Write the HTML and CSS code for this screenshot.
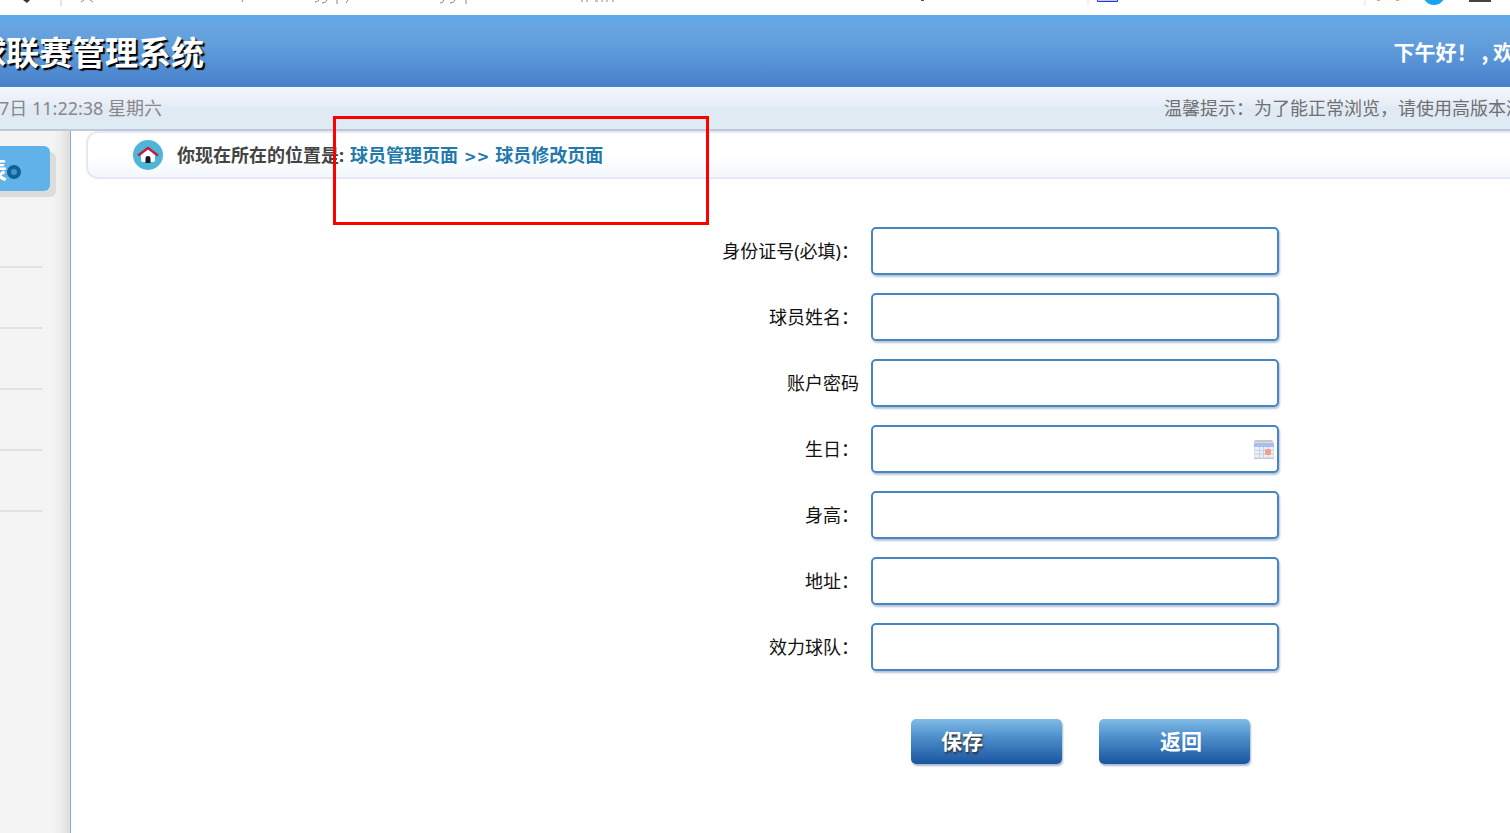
FILE: index.html
```html
<!DOCTYPE html>
<html lang="zh-CN">
<head>
    <meta charset="UTF-8">
    <meta name="viewport" content="width=device-width, initial-scale=1.0">
    <title>联赛管理系统</title>
    <link rel="stylesheet" href="styles.css">
</head>
<body>
    <div class="toolbar">
        <svg class="tool-left" width="620" height="8" viewBox="0 0 620 8">
            <path d="M23 0h7l-3 3z" fill="#333"/>
            <path d="M61 0v6" stroke="#e5e5e5" stroke-width="2"/>
            <path d="M81 2l3-2M90 0l3 2M243 0l-1 2M315 2q3 0 4-2M322 3q4 0 5-3M337 0v4M348 0l-2 3M440 3q3 0 4-3M450 3q4 0 5-3M466 0v4M581 1h2M587 0v2M595 1h3M602 0v2M606 1h2M613 0v2" stroke="#888" fill="none"/>
        </svg>
        <svg class="tool-right" width="610" height="8" viewBox="0 0 610 8">
            <path d="M21 0h3" stroke="#555" stroke-width="2"/>
            <path d="M188 0v6M465 0v6" stroke="#e5e5e5"/>
            <path d="M197.500 0v1.500h20V0" fill="#c5c8ee" stroke="#2433dd"/>
            <path d="M477 0h3M496 0h3" stroke="#ff9b57" stroke-width="2"/>
            <circle cx="534" cy="-6" r="11" fill="#12a5f4"/>
            <path d="M569 1h22" stroke="#444" stroke-width="2"/>
        </svg>
    </div>

    <header class="header">
        <h1>球联赛管理系统</h1>
        <div class="welcome"><span>下午好！</span><span>, 欢迎你</span></div>
    </header>

    <div class="time-bar">
        <span class="date">7日 11:22:38 星期六</span>
        <span class="tip">温馨提示：为了能正常浏览，请使用高版本浏</span>
    </div>

    <div class="main">
        <aside class="sidebar">
            <h2 class="menu-title">表<span class="dot"></span></h2>
            <ul class="menu">
                <li></li>
                <li></li>
                <li></li>
                <li></li>
                <li></li>
            </ul>
        </aside>

        <main class="content">
            <div class="location">
                <svg class="home" width="30" height="30" viewBox="0 0 30 30">
                    <circle cx="15" cy="15" r="15" fill="#4fb5d6"/>
                    <path d="M8 15l7-6 7 6v5q0 2-2 2H10q-2 0-2-2z" fill="#fff"/>
                    <path d="M5 15.500l10-7.500 10 7.500" fill="none" stroke="#c41e3f" stroke-width="2.400"/>
                    <path d="M12.500 23v-5q0-2 2.500-2t2.500 2v5z" fill="#16191d"/>
                </svg>
                <strong>你现在所在的位置是:</strong>
                <span class="page-name">球员管理页面<span class="arrow">&gt;&gt;</span>球员修改页面</span>
                <div class="highlight"></div>
            </div>

            <form class="player-form">
                <div class="field">
                    <label for="cardId">身份证号(必填)：</label>
                    <input type="text" id="cardId">
                </div>
                <div class="field">
                    <label for="name">球员姓名：</label>
                    <input type="text" id="name">
                </div>
                <div class="field">
                    <label for="password">账户密码</label>
                    <input type="password" id="password">
                </div>
                <div class="field">
                    <label for="birthday">生日：</label>
                    <div class="date-box">
                        <input type="text" id="birthday">
                        <svg class="calendar" width="22" height="21" viewBox="0 0 22 21">
                            <path d="M2 1h17l2 3v16H1V4z" fill="#d9dce1"/>
                            <path d="M2 1h17l1 2H1z" fill="#c8c8c8"/>
                            <path d="M1 4h20v4H1z" fill="#a9bdf0"/>
                            <path d="M2 8h18v10H2z" fill="#e9f0f9"/>
                            <path d="M2 11.500h18M2 15h18M6.500 8v10M10.500 8v10M15.500 8v10" stroke="#c4d3e6"/>
                            <rect x="12" y="10" width="6" height="6" rx="1" fill="#f3a08b"/>
                            <path d="M1 19.500h20" stroke="#c4cad4"/>
                        </svg>
                    </div>
                </div>
                <div class="field">
                    <label for="height">身高：</label>
                    <input type="text" id="height">
                </div>
                <div class="field">
                    <label for="address">地址：</label>
                    <input type="text" id="address">
                </div>
                <div class="field">
                    <label for="team">效力球队：</label>
                    <input type="text" id="team">
                </div>
                <div class="buttons">
                    <button type="submit" class="btn save">保存</button>
                    <button type="button" class="btn back">返回</button>
                </div>
            </form>
        </main>
    </div>
</body>
</html>
```
FILE: styles.css
```css
* {
    margin: 0;
    padding: 0;
    box-sizing: border-box;
}

body {
    min-height: 100vh;
    display: flex;
    flex-direction: column;
    overflow: hidden;
    background-color: #fff;
    color: #111;
    font-family: "Noto Sans", "Noto Sans CJK SC", sans-serif;
    font-size: 18px;
}

.toolbar {
    display: flex;
    justify-content: space-between;
    height: 15px;
}

.toolbar svg {
    display: block;
}

.header {
    display: flex;
    justify-content: space-between;
    align-items: center;
    height: 72px;
    overflow: hidden;
    white-space: nowrap;
    background: linear-gradient(#5faaec, #67a4de 20%, #5f9cdb 45%, #4780ca);
    color: #fff;
}

.header h1 {
    margin-left: -27px;
    font-family: "Noto Sans CJK SC", sans-serif;
    font-size: 33px;
    line-height: 48px;
    text-shadow: 2px 2px 1px #000;
}

.welcome {
    display: flex;
    gap: 4px;
    margin-right: -46px;
    font-family: "Noto Sans CJK SC", sans-serif;
    font-size: 21px;
    font-weight: bold;
}

.time-bar {
    display: flex;
    justify-content: space-between;
    align-items: center;
    height: 44px;
    padding-bottom: 2px;
    overflow: hidden;
    white-space: nowrap;
    background: linear-gradient(#f4f6fa, #e8eef8 40%, #e0eaf4 50%, #deebf2);
    border-bottom: 2px solid #bfc9d6;
    color: #888;
}

.date {
    margin-left: -1px;
}

.tip {
    margin-right: -14px;
    color: #707070;
}

.main {
    flex: 1;
    display: flex;
}

.sidebar {
    width: 71px;
    padding-top: 15px;
    background: linear-gradient(to right, #f4f4f4 75%, #efefed 85%, #dcdddc);
    border-right: 1px solid #82abd9;
}

.menu-title {
    display: flex;
    align-items: center;
    width: 70px;
    height: 45px;
    margin-left: -20px;
    padding-left: 3px;
    background-color: #60b2e8;
    border-radius: 6px;
    box-shadow: 6px 6px 0 #dcdcdc;
    color: #fff;
    font-size: 24px;
}

.dot {
    width: 14px;
    height: 14px;
    margin-top: 6px;
    background-color: #4793c5;
    border: 4px solid #0e6399;
    border-radius: 50%;
}

.menu {
    width: 42px;
    padding-top: 16px;
    list-style: none;
}

.menu li {
    height: 61px;
    border-bottom: 2px solid #e2e2e2;
}

.content {
    flex: 1;
    padding-left: 15px;
}

.location {
    position: relative;
    display: flex;
    align-items: center;
    height: 48px;
    padding-left: 45px;
    border: 2px solid #e5e8f5;
    border-right: 0;
    border-radius: 12px 0 0 12px;
    background: linear-gradient(#fff 50%, #f3f8fc);
    white-space: nowrap;
}

.location strong {
    margin-left: 14px;
    padding-bottom: 2px;
    color: #444;
}

.page-name {
    margin-left: 6px;
    padding-bottom: 2px;
    color: #2179ac;
    font-weight: bold;
}

.arrow {
    margin: 0 6px;
    font-family: "DejaVu Sans", sans-serif;
    font-size: 15px;
}

.highlight {
    position: absolute;
    top: -17px;
    left: 245px;
    width: 376px;
    height: 109px;
    border: 3px solid #f00;
}

.player-form {
    display: flex;
    flex-direction: column;
    gap: 18px;
    padding-top: 48px;
}

.field {
    display: grid;
    grid-template-columns: 1fr 408px;
    column-gap: 12px;
    align-items: center;
    padding-right: 231px;
}

.field label {
    padding-bottom: 3px;
    text-align: right;
}

.field input {
    display: block;
    width: 100%;
    height: 48px;
    padding: 0 12px;
    background-color: #fff;
    border: 2px solid #4686c4;
    border-radius: 5px;
    box-shadow: 1px 2px 2px #b8c4d4;
    font-size: 18px;
}

.date-box {
    position: relative;
}

.calendar {
    position: absolute;
    top: 14px;
    right: 4px;
}

.buttons {
    display: flex;
    justify-content: flex-end;
    gap: 37px;
    padding: 30px 260px 0 0;
}

.btn {
    width: 151px;
    height: 45px;
    padding-bottom: 3px;
    border: 0;
    border-radius: 5px;
    background: linear-gradient(#80bce8, #4e8fcb 40%, #1955a0);
    box-shadow: 1px 2px 2px #aab9cc;
    color: #fff;
    font-family: "Noto Sans CJK SC", sans-serif;
    font-size: 21px;
    font-weight: bold;
    text-align: left;
    cursor: pointer;
}

.save {
    padding-left: 30px;
    text-shadow: 1px 2px 2px #333;
}

.back {
    padding-left: 61px;
}
```
